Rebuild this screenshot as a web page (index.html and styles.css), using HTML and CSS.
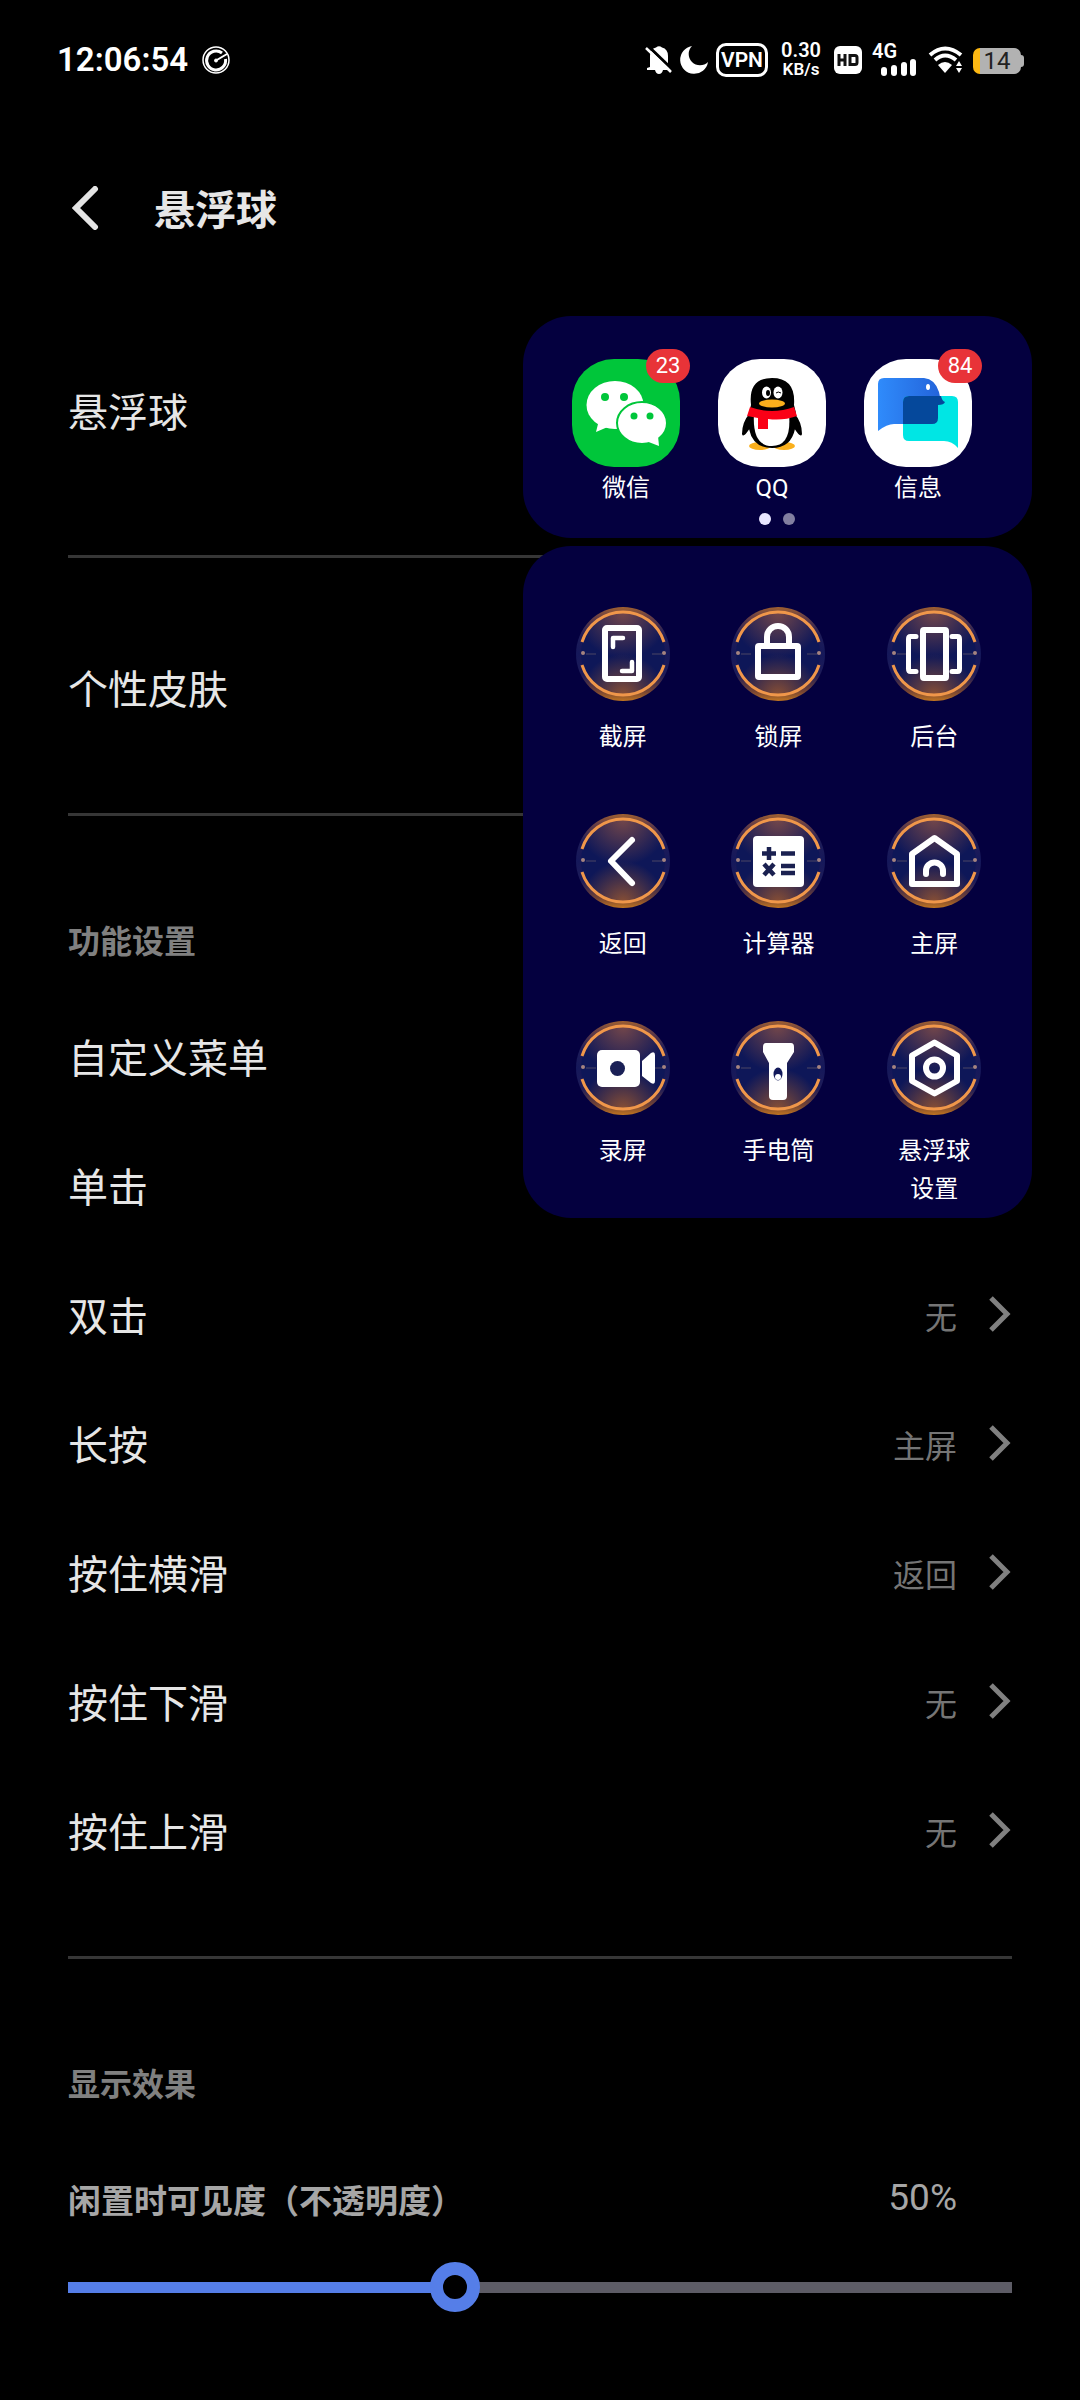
FILE: index.html
```html
<!DOCTYPE html>
<html lang="zh-CN">
<head>
<meta charset="utf-8">
<meta name="viewport" content="width=device-width, initial-scale=1">
<title>悬浮球</title>
<link rel="stylesheet" href="styles.css">
</head>
<body>
<svg class="defs" aria-hidden="true">
  <defs>
    <linearGradient id="glow" x1="0" y1="0" x2="0" y2="1">
      <stop offset="0" stop-color="#a0602f"/><stop offset=".1" stop-color="#6b4044"/><stop offset=".3" stop-color="#1e1c58"/>
      <stop offset=".5" stop-color="#15185a"/><stop offset=".72" stop-color="#1e1c58"/><stop offset=".9" stop-color="#764433"/><stop offset="1" stop-color="#c07420"/>
    </linearGradient>
    <radialGradient id="core-top" cx=".5" cy="0" r=".55"><stop offset="0" stop-color="#74474a"/><stop offset="1" stop-color="#74474a" stop-opacity="0"/></radialGradient>
    <radialGradient id="core-bottom" cx=".5" cy="1" r=".5"><stop offset="0" stop-color="#8a5034"/><stop offset="1" stop-color="#8a5034" stop-opacity="0"/></radialGradient>
    <linearGradient id="bird" x1="0" y1="0" x2="1" y2="0"><stop offset="0" stop-color="#2f8bfb"/><stop offset="1" stop-color="#2361d8"/></linearGradient>
    <symbol id="ring" viewBox="0 0 96 96">
      <circle cx="48" cy="48" r="47" fill="url(#glow)"/>
      <circle cx="48" cy="48" r="42" fill="#0e1758"/>
      <circle cx="48" cy="48" r="42" fill="url(#core-top)"/>
      <circle cx="48" cy="48" r="42" fill="url(#core-bottom)"/>
      <g fill="none" stroke="#f0974a" stroke-width="3"><path d="M7 36A43 43 0 0 1 89 36"/><path d="M7 59A43 43 0 0 0 89 59"/></g>
      <path d="M11 48h10M77 48h10" stroke="#4a4764" stroke-width="1"/>
      <g fill="#a48480"><circle cx="8" cy="47" r="2"/><circle cx="89" cy="47" r="2"/></g>
    </symbol>
    <symbol id="chevron" viewBox="0 0 24 36"><path d="M3 2l16 16L3 34" fill="none" stroke="#808080" stroke-width="5"/></symbol>
  </defs>
</svg>

<header class="status">
  <div class="status-left">
    <time class="clock">12:06:54</time>
    <svg width="28" height="28" viewBox="0 0 28 28" fill="none" stroke="#fff"><circle cx="14" cy="14" r="13" stroke-width="1.5"/><path d="M20 7A9.5 9.5 0 1 0 23.500 13" stroke-width="3"/><path d="M14 14.500L25 8" stroke-width="2"/><circle cx="14" cy="14.500" r="1.500" fill="#fff"/></svg>
  </div>
  <div class="status-right">
    <svg width="28" height="30" viewBox="0 0 28 30"><path fill="#fff" d="M5 22V11Q5 4 11 2.500Q14 0 17 2.500Q23 4 23 11V21L26 25H18Q17 29 14 29Q11 29 10 25H2V23z"/><path d="M2 0L29 26" stroke="#000" stroke-width="3"/><path d="M1 3L26 27" stroke="#fff" stroke-width="2.500"/></svg>
    <svg class="moon" width="30" height="30" viewBox="0 0 30 30"><path fill="#fff" d="M13 1A14 14 0 1 0 29 17A11 11 0 0 1 13 1z"/></svg>
    <span class="vpn">VPN</span>
    <span class="speed"><span class="speed-value">0.30</span><span class="speed-unit">KB/s</span></span>
    <svg class="hd" width="28" height="28" viewBox="0 0 28 28"><rect width="28" height="28" rx="6" fill="#fff"/><path d="M5 8v12M11 8v12M5 14h6M16 9.500h5q2 0 2 2v5q0 2-2 2h-5z" fill="none" stroke="#111" stroke-width="3"/></svg>
    <span class="cell"><span class="cell-type">4G</span><svg width="38" height="18" viewBox="0 0 38 18" fill="#fff"><rect x="1" y="8" width="6" height="9" rx="3"/><rect x="11" y="6" width="6" height="11" rx="3"/><rect x="21" y="3" width="6" height="14" rx="3"/><rect x="30" y="0" width="6" height="17" rx="3"/></svg></span>
    <svg class="wifi" width="36" height="30" viewBox="0 0 36 30"><g fill="none" stroke="#fff" stroke-width="4"><path d="M2 10Q17-3 33 10"/><path d="M7 15Q17 6 28 15"/></g><path fill="#fff" d="M10 20q7-6 14 0l-7 8z"/><path fill="#fff" d="M28 21l3-5 3 5zM28 23h6l-3 5z"/></svg>
    <span class="battery"><span class="battery-level">14</span></span>
  </div>
</header>

<main>
  <div class="titlebar">
    <button class="back" aria-label="返回"><svg width="28" height="44" viewBox="0 0 28 44"><path d="M23 3L4 22l19 19" fill="none" stroke="#e4e4e4" stroke-width="6" stroke-linecap="round"/></svg></button>
    <h1>悬浮球</h1>
  </div>

  <section class="group group-switch"><button class="row">悬浮球</button></section>
  <section class="group group-skin"><button class="row">个性皮肤</button></section>
  <section class="group group-actions">
    <h2>功能设置</h2>
    <button class="row">自定义菜单</button>
    <button class="row">单击</button>
    <button class="row">双击<span class="value">无</span><svg class="chevron"><use href="#chevron"/></svg></button>
    <button class="row">长按<span class="value">主屏</span><svg class="chevron"><use href="#chevron"/></svg></button>
    <button class="row">按住横滑<span class="value">返回</span><svg class="chevron"><use href="#chevron"/></svg></button>
    <button class="row">按住下滑<span class="value">无</span><svg class="chevron"><use href="#chevron"/></svg></button>
    <button class="row">按住上滑<span class="value">无</span><svg class="chevron"><use href="#chevron"/></svg></button>
  </section>
  <section class="group group-display">
    <h2>显示效果</h2>
    <div class="opacity-head"><label for="opacity">闲置时可见度（不透明度）</label><output for="opacity">50%</output></div>
    <input class="slider" id="opacity" type="range" min="16" max="100" value="50" style="--fill: 41%">
  </section>
</main>

<aside class="floating">
  <div class="panel apps-panel">
    <div class="apps">
      <button class="app">
        <span class="app-icon wechat"><svg viewBox="0 0 108 108"><g fill="#fff"><ellipse cx="43" cy="46" rx="28.500" ry="24"/><path d="M27 61L24 73L38 67z"/></g><g fill="#00c63a"><circle cx="33" cy="38" r="4"/><circle cx="52" cy="38" r="4"/></g><ellipse cx="70" cy="64" rx="25" ry="21" fill="#fff" stroke="#00c63a" stroke-width="2"/><path d="M74 82L87 87L86 77z" fill="#fff"/><g fill="#00c63a"><circle cx="62" cy="57" r="3.500"/><circle cx="78" cy="57" r="3.500"/></g></svg><span class="badge">23</span></span>
        <span>微信</span>
      </button>
      <button class="app">
        <span class="app-icon"><svg viewBox="0 0 108 108">
          <g fill="#faaf1c"><ellipse cx="42" cy="87" rx="11" ry="4"/><ellipse cx="66" cy="87" rx="11" ry="4"/></g>
          <path d="M32 54Q24 63 24 75Q25 80 32 69M76 54Q84 63 84 75Q83 80 76 69"/>
          <path d="M33 46Q30 19 54 19Q78 19 76 46Q80 58 77 70Q73 89 54 89Q35 89 31 70Q29 58 33 46z"/>
          <path d="M36 55H71Q74 87 54 87Q34 87 36 55z" fill="#fff"/>
          <path d="M32 48Q54 56 76 48L79 57Q65 62 50 60V70H40V59L29 57z" fill="#fa0016"/>
          <ellipse cx="54" cy="44.500" rx="13" ry="4" fill="#faaf1c"/>
          <g fill="#fff"><ellipse cx="48.500" cy="33.500" rx="4.500" ry="6"/><ellipse cx="60" cy="33.500" rx="4.500" ry="6"/></g>
          <ellipse cx="50" cy="34" rx="2" ry="3"/><path d="M58 34q2-2 5 0" fill="none" stroke="#000"/>
        </svg></span>
        <span>QQ</span>
      </button>
      <button class="app">
        <span class="app-icon"><svg viewBox="0 0 108 108">
          <path d="M14 25q0-6 6-6H60Q71 20 75 33Q76 41 81 43Q80 46 74 46V60q0 5-5 5H30Q23 65 14 72z" fill="url(#bird)"/>
          <path d="M45 37H88q6 0 6 6V89Q88 82 80 82H45q-6 0-6-6V43q0-6 6-6z" fill="#00e6e4"/>
          <path d="M45 37H77Q78 42 81 43Q80 46 74 46V59q0 6-6 6H39V43q0-6 6-6z" fill="#05489b"/>
          <ellipse cx="64" cy="28" rx="2" ry="3" fill="#fff"/>
        </svg><span class="badge">84</span></span>
        <span>信息</span>
      </button>
    </div>
    <div class="pager"><i class="dot current"></i><i class="dot"></i></div>
  </div>

  <div class="panel tools">
    <button class="tool"><svg viewBox="0 0 96 96"><use href="#ring"/><g class="line"><rect x="30" y="22" width="34" height="51" rx="2"/><path d="M38 41V32H48M57 56V65H47" stroke-width="4.500"/></g></svg><span>截屏</span></button>
    <button class="tool"><svg viewBox="0 0 96 96"><use href="#ring"/><g class="line"><rect x="28" y="40" width="40" height="31" rx="1"/><path d="M37 38V31a11 11 0 0 1 22 0V38"/></g></svg><span>锁屏</span></button>
    <button class="tool"><svg viewBox="0 0 96 96"><use href="#ring"/><g class="line"><rect x="37" y="24" width="23" height="48" rx="1"/><path d="M30 30.500H24.500Q22.500 30.500 22.500 33V63Q22.500 65.500 24.500 65.500H30M66 30.500H71.500Q73.500 30.500 73.500 33V63Q73.500 65.500 71.500 65.500H66" stroke-width="5"/></g></svg><span>后台</span></button>
    <button class="tool"><svg viewBox="0 0 96 96"><use href="#ring"/><path class="line" d="M57 27L36 48L57 70"/></svg><span>返回</span></button>
    <button class="tool"><svg viewBox="0 0 96 96"><use href="#ring"/><rect x="23" y="23" width="51" height="51" rx="4" fill="#fff"/><path d="M32 40.500H46M39 34V47M51 40.500H65M34 51L44 62M44 51L34 62M51 53H65M51 60H65" stroke="#1a2050" stroke-width="4.500"/></svg><span>计算器</span></button>
    <button class="tool"><svg viewBox="0 0 96 96"><use href="#ring"/><g class="line"><path d="M48.500 25L71 41V71H26V41z"/><path d="M40 61V58a8.500 8.500 0 0 1 17 0V61"/></g></svg><span>主屏</span></button>
    <button class="tool"><svg viewBox="0 0 96 96"><use href="#ring"/><rect x="22" y="30" width="43" height="37" rx="5" fill="#fff"/><circle cx="42.500" cy="48.500" r="7.500" fill="#1a2056"/><path d="M67 41L76 33Q80 31 80 35V61Q80 65 76 63L67 56z" fill="#fff"/></svg><span>录屏</span></button>
    <button class="tool"><svg viewBox="0 0 96 96"><use href="#ring"/><path d="M36 23H61Q64 23 64 27V32L57 43V76Q57 80 53 80H43Q39 80 39 76V43L33 32V27Q33 23 36 23z" fill="#fff"/><ellipse cx="48" cy="54" rx="4.500" ry="6.500" fill="#12195a"/><circle cx="48" cy="57" r="3" fill="#fff"/></svg><span>手电筒</span></button>
    <button class="tool"><svg viewBox="0 0 96 96"><use href="#ring"/><g class="line"><path d="M48.500 22.500L71 35.500V61L48.500 73.500L26 61V35.500z"/><circle cx="48.500" cy="48" r="8.500"/></g></svg><span>悬浮球设置</span></button>
  </div>
</aside>
</body>
</html>
```
FILE: styles.css
```css
* { box-sizing: border-box; }

body {
  position: relative;
  margin: 0;
  min-height: 100vh;
  background: #000;
  color: #e6e6e6;
  font-family: Roboto, "Noto Sans CJK SC", sans-serif;
}

button {
  padding: 0;
  border: 0;
  background: none;
  color: inherit;
  font: inherit;
  text-align: left;
  cursor: pointer;
}

svg { display: block; flex: none; }
.defs { position: absolute; width: 0; height: 0; }

/* Status bar */
.status {
  display: flex;
  justify-content: space-between;
  height: 120px;
  padding: 0 56px 0 57px;
  color: #fff;
}
.status-left, .status-right { display: flex; align-items: center; height: 120px; }
.status-left { gap: 14px; }
.clock { font-size: 33px; font-weight: 600; line-height: 40px; }
.moon { margin-left: 6px; }
.vpn {
  width: 52px;
  margin-left: 7px;
  border: 3px solid #fff;
  border-radius: 10px;
  font-size: 21px;
  font-weight: 600;
  line-height: 28px;
  text-align: center;
}
.speed { display: grid; width: 40px; margin-left: 13px; text-align: center; font-weight: 600; }
.speed-value { font-size: 20px; line-height: 19px; }
.speed-unit { font-size: 17px; line-height: 19px; }
.hd { margin-left: 13px; }
.cell { display: grid; margin-left: 10px; }
.cell-type { font-size: 20px; font-weight: 600; line-height: 16px; }
.cell svg { margin-left: 8px; }
.wifi { margin-left: 10px; }
.battery {
  position: relative;
  width: 48px;
  margin: 2px 3px 0 9px;
  border-radius: 7px;
  background: linear-gradient(90deg, #fdb813 7px, #b2b2b2 7px);
  color: #222;
  text-align: center;
}
.battery::after {
  content: "";
  position: absolute;
  right: -3px;
  top: 7px;
  width: 4px;
  height: 12px;
  border-radius: 0 3px 3px 0;
  background: #b2b2b2;
}
.battery-level { display: block; font-size: 24px; line-height: 26px; }

/* Settings page */
main { padding: 0 68px; }
.titlebar { display: flex; align-items: center; height: 178px; gap: 54px; }
.back { padding: 0 0 2px 4px; }
h1 { margin: 0; padding-top: 4px; font-size: 41px; font-weight: 700; line-height: 60px; }
.group { border-bottom: 3px solid #363636; }
.group:last-child { border-bottom: 0; }
.group-switch { padding: 52px 0 78px; }
.group-skin { padding: 68px 0 58px; }
.group-actions { padding: 91px 0 58px; }
.group-display { padding: 91px 0 80px; }
h2 { margin: 0; color: #808080; font-size: 32px; font-weight: 700; line-height: 70px; }
.group-actions h2 { margin-bottom: 18px; }
.row {
  display: flex;
  align-items: center;
  width: 100%;
  height: 129px;
  font-size: 40px;
  line-height: 60px;
}
.group-switch .row { height: 127px; }
.value { margin-left: auto; color: #757575; font-size: 32px; }
.chevron { width: 24px; height: 36px; margin: 0 0 8px 31px; }
.opacity-head {
  display: flex;
  align-items: center;
  justify-content: space-between;
  height: 70px;
  margin-top: 44px;
  padding-right: 55px;
  color: #a6a6a6;
}
.opacity-head label { font-size: 33px; font-weight: 700; }
.opacity-head output { padding-bottom: 4px; font-size: 37px; }

.slider {
  display: block;
  width: 100%;
  height: 50px;
  margin: 28px 0 0;
  appearance: none;
  background: none;
}
.slider::-webkit-slider-runnable-track {
  height: 11px;
  background: linear-gradient(90deg, #557ee8 var(--fill), #5d5c66 var(--fill));
}
.slider::-webkit-slider-thumb {
  width: 50px;
  height: 50px;
  margin-top: -20px;
  appearance: none;
  border: 13px solid #557ee8;
  border-radius: 50%;
  background: #000;
}

/* Floating menu over the page */
.floating {
  position: absolute;
  top: 316px;
  right: 48px;
  display: grid;
  gap: 8px;
  width: 509px;
  color: #fff;
  font-size: 24px;
  line-height: 38px;
}
.panel { border-radius: 48px; background: #04003f; }
.apps-panel { padding: 43px 51px 13px 49px; }
.apps { display: flex; gap: 38px; }
.app { display: grid; width: 108px; text-align: center; }
.app-icon { position: relative; height: 110px; }
.app-icon svg { width: 108px; height: 108px; border-radius: 42px; background: #fff; }
.app-icon.wechat svg { background: #00c63a; }
.badge {
  position: absolute;
  top: -10px;
  right: -10px;
  width: 44px;
  border-radius: 17px;
  background: #e83338;
  font-size: 22px;
  line-height: 34px;
}
.pager { display: flex; justify-content: center; gap: 12px; padding-top: 6px; }
.dot { width: 12px; height: 12px; border-radius: 50%; background: #827fa0; }
.dot.current { background: #e9e6ff; }

.tools {
  display: grid;
  grid-template-columns: repeat(3, 1fr);
  row-gap: 55px;
  padding: 60px 20px 10px 22px;
}
.tool { display: grid; justify-items: center; align-content: start; gap: 16px; text-align: center; }
.tool svg { width: 96px; height: 96px; }
.tool span { width: 72px; white-space: normal; }
.tools .tool { min-height: 152px; }
.line { fill: none; stroke: #fff; stroke-width: 6; stroke-linecap: round; stroke-linejoin: round; }
```
